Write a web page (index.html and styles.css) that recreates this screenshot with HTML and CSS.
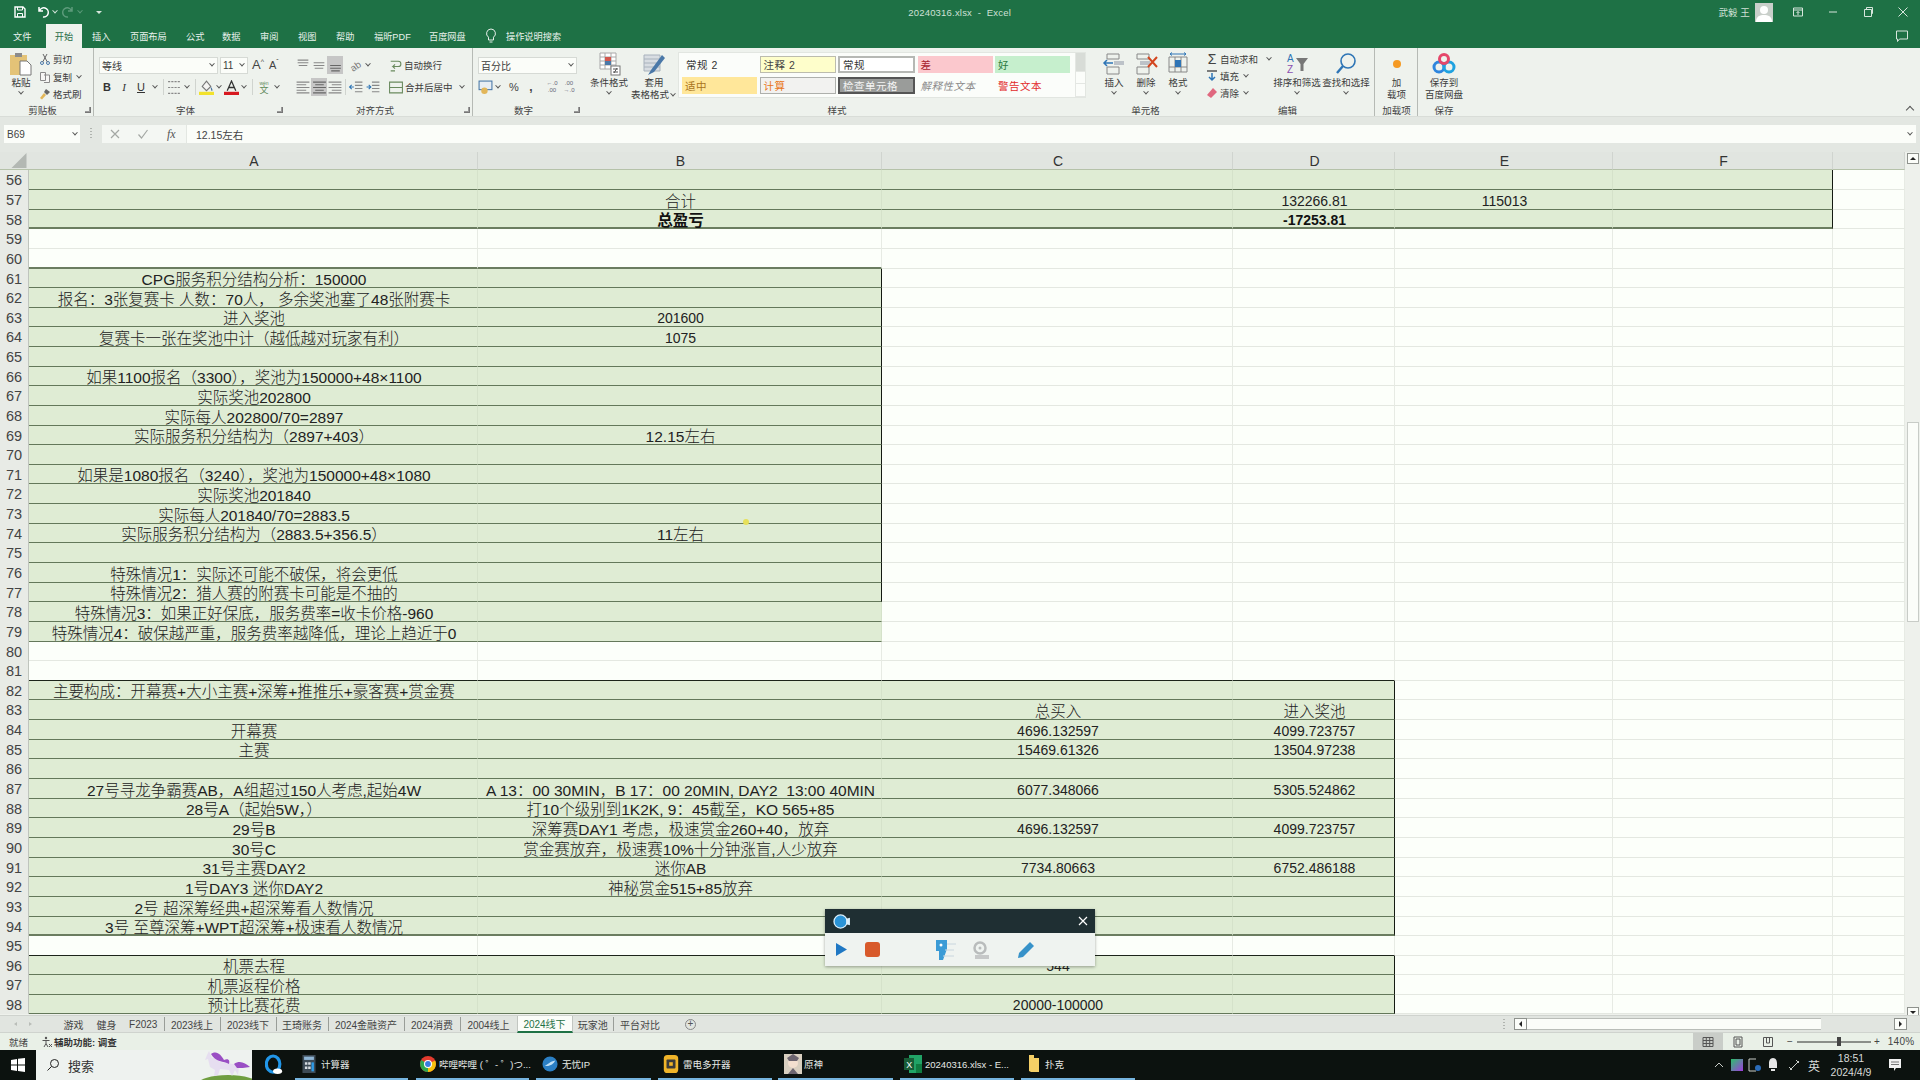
FILE: index.html
```html
<!DOCTYPE html>
<html lang="zh-CN">
<head>
<meta charset="utf-8">
<title>20240316.xlsx - Excel</title>
<link rel="stylesheet" href="styles.css">
</head>
<body>
<div class="app">
  <header class="titlebar">
    <div class="qat">
      <svg class="i14" viewBox="0 0 14 14"><path d="M2 2h8l2 2v8H2z" fill="none" stroke="#fff" stroke-width="1.4"/><path d="M4.5 2v3h5V2M4.5 12V8.5h5V12" fill="none" stroke="#fff"/></svg>
      <svg class="i14 q1" viewBox="0 0 14 14"><path d="M3 2v4h4M3.4 5.8A4.6 4.6 0 1 1 7 12" fill="none" stroke="#fff" stroke-width="1.5"/></svg>
      <span class="car w"></span>
      <svg class="i14 q2" viewBox="0 0 14 14"><path d="M11 2v4H7M10.6 5.8A4.6 4.6 0 1 0 7 12" fill="none" stroke="#5d9b7b" stroke-width="1.5"/></svg>
      <span class="car dim"></span>
      <span class="more"></span>
    </div>
    <div class="doc">20240316.xlsx&nbsp; -&nbsp; Excel</div>
    <div class="winbtns">
      <span class="user">武毅 王</span>
      <svg class="avatar" viewBox="0 0 18 19"><rect width="18" height="19" fill="#c9cfca"/><circle cx="9" cy="7" r="4" fill="#fff"/><path d="M1 19c0-6 4-7 8-7s8 1 8 7z" fill="#fff"/></svg>
      <svg class="i12 rd" viewBox="0 0 12 12"><path d="M1.500 2h9v8h-9zM1.500 4h9M6 9V5.500M4.500 7 6 5.500 7.500 7" fill="none" stroke="#d7e6dd"/></svg>
      <span class="wb"><svg class="i12" viewBox="0 0 12 12"><path d="M2 6h8" stroke="#d7e6dd"/></svg></span>
      <span class="wb"><svg class="i12" viewBox="0 0 12 12"><path d="M2.500 3.500h7v7h-7zM4.500 3.500v-2h6v6h-1" fill="none" stroke="#d7e6dd"/></svg></span>
      <span class="wb"><svg class="i12" viewBox="0 0 12 12"><path d="M1.500 1.500l9 9M10.500 1.500l-9 9" stroke="#d7e6dd"/></svg></span>
    </div>
  </header>

  <nav class="tabbar">
    <span class="rt tn-file">文件</span>
    <span class="rt active">开始</span>
    <span class="rt tn-ins">插入</span>
    <span class="rt tn-page">页面布局</span>
    <span class="rt tn-form">公式</span>
    <span class="rt tn-std">数据</span>
    <span class="rt tn-std">审阅</span>
    <span class="rt tn-std">视图</span>
    <span class="rt tn-std">帮助</span>
    <span class="rt tn-pdf">福昕PDF</span>
    <span class="rt tn-pan">百度网盘</span>
    <svg class="bulb" viewBox="0 0 12 16"><path d="M6 1a4.500 4.500 0 0 0-2.500 8.200V12h5V9.200A4.500 4.500 0 0 0 6 1zM4.500 14h3" fill="none" stroke="#e6f0ea"/></svg>
    <span class="rt tn-tell">操作说明搜索</span>
    <svg class="cmt" viewBox="0 0 14 14"><path d="M1.500 2h11v8h-8l-2 2.500V10h-1z" fill="none" stroke="#d7e6dd"/></svg>
  </nav>

  <section class="ribbon">
    <div class="grp g-clip sep">
      <div class="body">
        <div class="big paste">
          <svg class="i24" viewBox="0 0 24 24"><rect x="1" y="3" width="17" height="20" fill="#e4c377"/><rect x="6" y="1" width="7" height="4" fill="#8c8c8c"/><path d="M11 9h7l4 4v10H11z" fill="#fff" stroke="#777"/></svg>
          <span>粘贴</span><span class="car"></span>
        </div>
        <div class="smalls clipsm">
          <div class="sm"><svg class="i12" viewBox="0 0 12 12"><circle cx="3" cy="10" r="1.500" fill="none" stroke="#4a78a8"/><circle cx="9" cy="10" r="1.500" fill="none" stroke="#4a78a8"/><path d="M3.800 8.800 8 1M8.200 8.800 4 1" stroke="#666"/></svg><span>剪切</span></div>
          <div class="sm"><svg class="i12" viewBox="0 0 12 12"><path d="M1.500 1.500h5v8h-5zM5 4h5.500v7.500H5" fill="#f6f6f4" stroke="#8a8a8a"/></svg><span>复制</span><span class="car"></span></div>
          <div class="sm"><svg class="i12" viewBox="0 0 12 12"><path d="M7 1l4 3-3 3-3-3z" fill="#666"/><path d="M5 5 1 10l2 1.500L7 7z" fill="#e2b659"/></svg><span>格式刷</span></div>
        </div>
      </div>
      <div class="lab"><span>剪贴板</span><i class="lau"></i></div>
    </div>

    <div class="grp g-font">
      <div class="body col">
        <div class="line">
          <span class="box fname">等线<span class="car"></span></span>
          <span class="box fsize">11<span class="car"></span></span>
          <span class="ab big-a">A<sup>^</sup></span>
          <span class="ab small-a">A<sup>ˇ</sup></span>
        </div>
        <div class="line l2">
          <span class="ib b">B</span><span class="ib it">I</span><span class="ib un">U</span><span class="car"></span>
          <span class="vs"></span>
          <svg class="ico" viewBox="0 0 14 14"><path d="M1 1.500h12M1 7h12M1 12.500h12" stroke="#888" stroke-dasharray="2 1"/></svg><span class="car"></span>
          <span class="vs"></span>
          <svg class="ico" viewBox="0 0 14 14"><path d="M7 1 3 6l4 4 4-4z" fill="#f4f4f2" stroke="#777"/><path d="M11 7c1 1.500 1.500 2 1 3" stroke="#4a78a8"/><rect y="11" width="14" height="3" fill="#f2e22c"/></svg><span class="car"></span>
          <svg class="ico" viewBox="0 0 14 14"><path d="M3 10 7 1l4 9M4.500 7h5" fill="none" stroke="#333" stroke-width="1.200"/><rect y="11" width="14" height="3" fill="#d71920"/></svg><span class="car"></span>
          <span class="vs"></span>
          <span class="wen"><small>wén</small>文</span><span class="car"></span>
        </div>
      </div>
      <div class="lab"><span>字体</span><i class="lau"></i></div>
    </div>

    <div class="grp g-align sep">
      <div class="body col">
        <div class="line">
          <svg class="ico" viewBox="0 0 14 14"><path d="M2 2h10M2 4.500h10M3 7h8" stroke="#888"/></svg>
          <svg class="ico" viewBox="0 0 14 14"><path d="M2 4.500h10M2 7h10M3 9.500h8" stroke="#888"/></svg>
          <span class="sel"><svg class="ico" viewBox="0 0 14 14"><path d="M2 7h10M2 9.500h10M3 12h8" stroke="#666"/></svg></span>
          <svg class="ico m4" viewBox="0 0 14 14"><text x="2" y="11" font-size="9" fill="#777" font-family="Liberation Sans" transform="rotate(-35 7 7)">ab</text></svg><span class="car"></span>
          <svg class="ico m15" viewBox="0 0 14 14"><path d="M3 3h7a2.500 2.500 0 0 1 0 5H5l2-2M5 8l2 2M3 12h4" fill="none" stroke="#6a8a5e"/></svg>
          <span class="tx m1">自动换行</span>
        </div>
        <div class="line l2">
          <svg class="ico" viewBox="0 0 14 14"><path d="M1 2h12M1 4.500h9M1 7h12M1 9.500h9M1 12h12" stroke="#888"/></svg>
          <span class="sel"><svg class="ico" viewBox="0 0 14 14"><path d="M1 2h12M3 4.500h8M1 7h12M3 9.500h8M1 12h12" stroke="#666"/></svg></span>
          <svg class="ico" viewBox="0 0 14 14"><path d="M1 2h12M4 4.500h9M1 7h12M4 9.500h9M1 12h12" stroke="#888"/></svg>
          <span class="vs n"></span>
          <svg class="ico" viewBox="0 0 14 14"><path d="M6 2h7M6 5h7M6 8h7M6 11h7" stroke="#888"/><path d="M1 6.500h4M3 4.500l-2 2 2 2" fill="none" stroke="#2e75b6"/></svg>
          <svg class="ico m3" viewBox="0 0 14 14"><path d="M6 2h7M6 5h7M6 8h7M6 11h7" stroke="#888"/><path d="M1 6.500h4M3 4.500l2 2-2 2" fill="none" stroke="#2e75b6"/></svg>
          <svg class="ico m7" viewBox="0 0 14 14"><path d="M1 2h12v10H1zM1 7h12" fill="none" stroke="#6a8a5e"/></svg>
          <span class="tx m1">合并后居中</span><span class="car m5"></span>
        </div>
      </div>
      <div class="lab"><span>对齐方式</span><i class="lau"></i></div>
    </div>

    <div class="grp g-num">
      <div class="body col">
        <div class="line"><span class="box nfmt">百分比<span class="car"></span></span></div>
        <div class="line l2 nrow">
          <svg class="ico" viewBox="0 0 14 14"><rect x="1" y="1" width="12" height="8" fill="#e8eef4" stroke="#4a78a8"/><circle cx="6" cy="10" r="3" fill="#e2b659"/></svg><span class="car"></span>
          <span class="pct">%</span><span class="cma">,</span>
          <span class="dec">←.0<br>.00</span><span class="dec">.00<br>→.0</span>
        </div>
      </div>
      <div class="lab"><span>数字</span><i class="lau"></i></div>
    </div>

    <div class="grp g-sty">
      <div class="body">
        <div class="big cf">
          <svg class="i24" viewBox="0 0 24 24"><path d="M3 1h16v16H3zM3 5h16M3 9h16M3 13h16M8 1v16M14 1v16" fill="#fff" stroke="#a8a8a8"/><rect x="8" y="5" width="6" height="4" fill="#d3574d"/><rect x="8" y="9" width="6" height="4" fill="#4a78a8"/><rect x="14" y="14" width="9" height="9" fill="#fff" stroke="#777"/><path d="M16 17h5M16 20h5M20 16l-3 5" stroke="#555"/></svg>
          <span>条件格式</span><span class="car"></span>
        </div>
        <div class="big tf">
          <svg class="i24" viewBox="0 0 24 24"><path d="M2 3h16v16H2zM2 7h16M2 11h16M2 15h16" fill="#d8dde2" stroke="#a8b2bc"/><path d="M20 3 9 18l-3 5 6-3L23 6z" fill="#4a78a8"/></svg>
          <span>套用</span><span>表格格式<i class="car in"></i></span>
        </div>
        <div class="gallery">
          <div class="gcells">
            <span class="st s1">常规 2</span>
            <span class="st s2">注释 2</span>
            <span class="st s3">常规</span>
            <span class="st s4">差</span>
            <span class="st s5">好</span>
            <span class="st s6">适中</span>
            <span class="st s7">计算</span>
            <span class="st s8">检查单元格</span>
            <span class="st s9">解释性文本</span>
            <span class="st s10">警告文本</span>
          </div>
          <div class="gscroll"><i></i><i></i><i></i></div>
        </div>
      </div>
      <div class="lab"><span>样式</span></div>
    </div>

    <div class="grp g-cells">
      <div class="body">
        <div class="big w32">
          <svg class="i24" viewBox="0 0 24 24"><path d="M5 2h12v5H5zM5 15h12v7H5z" fill="none" stroke="#888"/><rect x="12" y="9" width="10" height="4" fill="#bcc2c8"/><path d="M11 11H2M5 8l-3 3 3 3" fill="none" stroke="#2e75b6" stroke-width="1.500"/></svg>
          <span>插入</span><span class="car"></span>
        </div>
        <div class="big w32">
          <svg class="i24" viewBox="0 0 24 24"><path d="M3 2h12v5H3zM3 15h12v7H3z" fill="none" stroke="#888"/><rect x="6" y="9" width="10" height="4" fill="#bcc2c8"/><path d="M14 5l9 10M23 5l-9 10" stroke="#d3461f" stroke-width="2"/></svg>
          <span>删除</span><span class="car"></span>
        </div>
        <div class="big w32">
          <svg class="i24" viewBox="0 0 24 24"><path d="M3 5h18v15H3zM9 5v15M15 5v15M3 15h18" fill="none" stroke="#888"/><rect x="9" y="8" width="6" height="7" fill="#2e75b6"/><path d="M4 2h16M4 2l2-1.500M4 2l2 1.500M20 2l-2-1.500M20 2l-2 1.500" fill="none" stroke="#2e75b6"/></svg>
          <span>格式</span><span class="car"></span>
        </div>
      </div>
      <div class="lab"><span>单元格</span></div>
    </div>

    <div class="grp g-edit sep">
      <div class="body">
        <div class="smalls ed">
          <div class="sm"><span class="sig">Σ</span><span>自动求和</span><span class="car m8"></span></div>
          <div class="sm"><svg class="i12" viewBox="0 0 12 12"><path d="M1 1h10" stroke="#555" stroke-width="1.500"/><path d="M6 3v7M3 7l3 3 3-3" fill="none" stroke="#2e75b6" stroke-width="1.500"/></svg><span>填充</span><span class="car"></span></div>
          <div class="sm"><svg class="i12" viewBox="0 0 12 12"><path d="M7 1l4 4-6 6-4-3z" fill="#e0687f"/></svg><span>清除</span><span class="car"></span></div>
        </div>
        <div class="big w46">
          <svg class="i24" viewBox="0 0 24 24"><text x="2" y="10" font-size="10" fill="#2e75b6" font-family="Liberation Sans">A</text><text x="2" y="21" font-size="10" fill="#8a4fb0" font-family="Liberation Sans">Z</text><path d="M11 6h12l-4.500 6v7h-3v-7z" fill="#777"/></svg>
          <span class="nw">排序和筛选</span><span class="car"></span>
        </div>
        <div class="big w46">
          <svg class="i24" viewBox="0 0 24 24"><circle cx="14" cy="9" r="7" fill="none" stroke="#2e75b6" stroke-width="1.600"/><path d="M9 14l-6 7" stroke="#2e75b6" stroke-width="2.400"/></svg>
          <span class="nw">查找和选择</span><span class="car"></span>
        </div>
      </div>
      <div class="lab"><span>编辑</span></div>
    </div>

    <div class="grp g-add sep">
      <div class="body">
        <div class="big">
          <svg class="i24" viewBox="0 0 24 24"><circle cx="12" cy="12" r="4" fill="#f59a23"/></svg>
          <span>加</span><span>载项</span>
        </div>
      </div>
      <div class="lab"><span>加载项</span></div>
    </div>

    <div class="grp g-save">
      <div class="body">
        <div class="big">
          <svg class="i24" viewBox="0 0 24 24"><circle cx="7" cy="15" r="5" fill="none" stroke="#2e86de" stroke-width="3"/><circle cx="17" cy="15" r="5" fill="none" stroke="#1fa2e0" stroke-width="3"/><circle cx="12" cy="7" r="4.500" fill="none" stroke="#e5476a" stroke-width="3"/></svg>
          <span>保存到</span><span>百度网盘</span>
        </div>
      </div>
      <div class="lab"><span>保存</span></div>
    </div>
    <span class="collapse"></span>
  </section>

  <section class="fbar">
    <div class="namebox">B69<span class="car"></span></div>
    <span class="dots"></span>
    <div class="fbtns">
      <svg class="i12" viewBox="0 0 12 12"><path d="M2 2l8 8M10 2l-8 8" stroke="#a4a8a4" stroke-width="1.200"/></svg>
      <svg class="i12" viewBox="0 0 12 12"><path d="M1.500 6.500 4.500 10l6-8" fill="none" stroke="#a4a8a4" stroke-width="1.200"/></svg>
      <span class="fx">fx</span>
    </div>
    <div class="finput">12.15左右<span class="car"></span></div>
  </section>

  <main class="work">
    <div class="sheet">
      <div class="row hdr">
        <span class="corner"><svg viewBox="0 0 16 16"><path d="M16 0v16H0z" fill="#b3b8b3"/></svg></span>
        <span class="ch">A</span><span class="ch">B</span><span class="ch">C</span><span class="ch">D</span><span class="ch">E</span><span class="ch">F</span><span class="ch"></span>
      </div>
      <div class="row fa"><span class="rh">56</span><span class="c"></span><span class="c"></span><span class="c"></span><span class="c"></span><span class="c"></span><span class="c"></span><span class="c"></span></div>
      <div class="row fa"><span class="rh">57</span><span class="c"></span><span class="c">合计</span><span class="c"></span><span class="c n">132266.81</span><span class="c n">115013</span><span class="c"></span><span class="c"></span></div>
      <div class="row fa thick"><span class="rh">58</span><span class="c"></span><span class="c bold">总盈亏</span><span class="c"></span><span class="c n bold">-17253.81</span><span class="c"></span><span class="c"></span><span class="c"></span></div>
      <div class="row"><span class="rh">59</span><span class="c"></span><span class="c"></span><span class="c"></span><span class="c"></span><span class="c"></span><span class="c"></span><span class="c"></span></div>
      <div class="row over-b"><span class="rh">60</span><span class="c"></span><span class="c"></span><span class="c"></span><span class="c"></span><span class="c"></span><span class="c"></span><span class="c"></span></div>
      <div class="row fb e"><span class="rh">61</span><span class="c">CPG服务积分结构分析：150000</span><span class="c"></span><span class="c"></span><span class="c"></span><span class="c"></span><span class="c"></span><span class="c"></span></div>
      <div class="row fb e"><span class="rh">62</span><span class="c">报名：3张复赛卡 人数：70人， 多余奖池塞了48张附赛卡</span><span class="c"></span><span class="c"></span><span class="c"></span><span class="c"></span><span class="c"></span><span class="c"></span></div>
      <div class="row fb e"><span class="rh">63</span><span class="c">进入奖池</span><span class="c n">201600</span><span class="c"></span><span class="c"></span><span class="c"></span><span class="c"></span><span class="c"></span></div>
      <div class="row fb e"><span class="rh">64</span><span class="c">复赛卡一张在奖池中计（越低越对玩家有利）</span><span class="c n">1075</span><span class="c"></span><span class="c"></span><span class="c"></span><span class="c"></span><span class="c"></span></div>
      <div class="row fb e"><span class="rh">65</span><span class="c"></span><span class="c"></span><span class="c"></span><span class="c"></span><span class="c"></span><span class="c"></span><span class="c"></span></div>
      <div class="row fb e"><span class="rh">66</span><span class="c">如果1100报名（3300），奖池为150000+48×1100</span><span class="c"></span><span class="c"></span><span class="c"></span><span class="c"></span><span class="c"></span><span class="c"></span></div>
      <div class="row fb e"><span class="rh">67</span><span class="c">实际奖池202800</span><span class="c"></span><span class="c"></span><span class="c"></span><span class="c"></span><span class="c"></span><span class="c"></span></div>
      <div class="row fb e"><span class="rh">68</span><span class="c">实际每人202800/70=2897</span><span class="c"></span><span class="c"></span><span class="c"></span><span class="c"></span><span class="c"></span><span class="c"></span></div>
      <div class="row fb e"><span class="rh">69</span><span class="c">实际服务积分结构为（2897+403）</span><span class="c">12.15左右</span><span class="c"></span><span class="c"></span><span class="c"></span><span class="c"></span><span class="c"></span></div>
      <div class="row fb e"><span class="rh">70</span><span class="c"></span><span class="c"></span><span class="c"></span><span class="c"></span><span class="c"></span><span class="c"></span><span class="c"></span></div>
      <div class="row fb e"><span class="rh">71</span><span class="c">如果是1080报名（3240），奖池为150000+48×1080</span><span class="c"></span><span class="c"></span><span class="c"></span><span class="c"></span><span class="c"></span><span class="c"></span></div>
      <div class="row fb e"><span class="rh">72</span><span class="c">实际奖池201840</span><span class="c"></span><span class="c"></span><span class="c"></span><span class="c"></span><span class="c"></span><span class="c"></span></div>
      <div class="row fb e"><span class="rh">73</span><span class="c">实际每人201840/70=2883.5</span><span class="c"></span><span class="c"></span><span class="c"></span><span class="c"></span><span class="c"></span><span class="c"></span></div>
      <div class="row fb e"><span class="rh">74</span><span class="c">实际服务积分结构为（2883.5+356.5）</span><span class="c">11左右</span><span class="c"></span><span class="c"></span><span class="c"></span><span class="c"></span><span class="c"></span></div>
      <div class="row fb e"><span class="rh">75</span><span class="c"></span><span class="c"></span><span class="c"></span><span class="c"></span><span class="c"></span><span class="c"></span><span class="c"></span></div>
      <div class="row fb e"><span class="rh">76</span><span class="c">特殊情况1：实际还可能不破保，将会更低</span><span class="c"></span><span class="c"></span><span class="c"></span><span class="c"></span><span class="c"></span><span class="c"></span></div>
      <div class="row fb e"><span class="rh">77</span><span class="c">特殊情况2：猎人赛的附赛卡可能是不抽的</span><span class="c"></span><span class="c"></span><span class="c"></span><span class="c"></span><span class="c"></span><span class="c"></span></div>
      <div class="row fb"><span class="rh">78</span><span class="c">特殊情况3：如果正好保底，服务费率=收卡价格-960</span><span class="c"></span><span class="c"></span><span class="c"></span><span class="c"></span><span class="c"></span><span class="c"></span></div>
      <div class="row fb"><span class="rh">79</span><span class="c">特殊情况4：破保越严重，服务费率越降低，理论上趋近于0</span><span class="c"></span><span class="c"></span><span class="c"></span><span class="c"></span><span class="c"></span><span class="c"></span></div>
      <div class="row"><span class="rh">80</span><span class="c"></span><span class="c"></span><span class="c"></span><span class="c"></span><span class="c"></span><span class="c"></span><span class="c"></span></div>
      <div class="row over-d"><span class="rh">81</span><span class="c"></span><span class="c"></span><span class="c"></span><span class="c"></span><span class="c"></span><span class="c"></span><span class="c"></span></div>
      <div class="row fd"><span class="rh">82</span><span class="c">主要构成：开幕赛+大小主赛+深筹+推推乐+豪客赛+赏金赛</span><span class="c"></span><span class="c"></span><span class="c"></span><span class="c"></span><span class="c"></span><span class="c"></span></div>
      <div class="row fd"><span class="rh">83</span><span class="c"></span><span class="c"></span><span class="c">总买入</span><span class="c">进入奖池</span><span class="c"></span><span class="c"></span><span class="c"></span></div>
      <div class="row fd"><span class="rh">84</span><span class="c">开幕赛</span><span class="c"></span><span class="c n">4696.132597</span><span class="c n">4099.723757</span><span class="c"></span><span class="c"></span><span class="c"></span></div>
      <div class="row fd"><span class="rh">85</span><span class="c">主赛</span><span class="c"></span><span class="c n">15469.61326</span><span class="c n">13504.97238</span><span class="c"></span><span class="c"></span><span class="c"></span></div>
      <div class="row fd"><span class="rh">86</span><span class="c"></span><span class="c"></span><span class="c"></span><span class="c"></span><span class="c"></span><span class="c"></span><span class="c"></span></div>
      <div class="row fd"><span class="rh">87</span><span class="c">27号寻龙争霸赛AB，A组超过150人考虑,起始4W</span><span class="c">A 13：00 30MIN，B 17：00 20MIN, DAY2&nbsp; 13:00 40MIN</span><span class="c n">6077.348066</span><span class="c n">5305.524862</span><span class="c"></span><span class="c"></span><span class="c"></span></div>
      <div class="row fd"><span class="rh">88</span><span class="c">28号A（起始5W，）</span><span class="c">打10个级别到1K2K, 9：45截至，KO 565+85</span><span class="c"></span><span class="c"></span><span class="c"></span><span class="c"></span><span class="c"></span></div>
      <div class="row fd"><span class="rh">89</span><span class="c">29号B</span><span class="c">深筹赛DAY1 考虑，极速赏金260+40，放弃</span><span class="c n">4696.132597</span><span class="c n">4099.723757</span><span class="c"></span><span class="c"></span><span class="c"></span></div>
      <div class="row fd"><span class="rh">90</span><span class="c">30号C</span><span class="c">赏金赛放弃，极速赛10%十分钟涨盲,人少放弃</span><span class="c"></span><span class="c"></span><span class="c"></span><span class="c"></span><span class="c"></span></div>
      <div class="row fd"><span class="rh">91</span><span class="c">31号主赛DAY2</span><span class="c">迷你AB</span><span class="c n">7734.80663</span><span class="c n">6752.486188</span><span class="c"></span><span class="c"></span><span class="c"></span></div>
      <div class="row fd"><span class="rh">92</span><span class="c">1号DAY3 迷你DAY2</span><span class="c">神秘赏金515+85放弃</span><span class="c"></span><span class="c"></span><span class="c"></span><span class="c"></span><span class="c"></span></div>
      <div class="row fd"><span class="rh">93</span><span class="c">2号 超深筹经典+超深筹看人数情况</span><span class="c"></span><span class="c"></span><span class="c"></span><span class="c"></span><span class="c"></span><span class="c"></span></div>
      <div class="row fd thick"><span class="rh">94</span><span class="c">3号 至尊深筹+WPT超深筹+极速看人数情况</span><span class="c"></span><span class="c"></span><span class="c"></span><span class="c"></span><span class="c"></span><span class="c"></span></div>
      <div class="row over-d"><span class="rh">95</span><span class="c"></span><span class="c"></span><span class="c"></span><span class="c"></span><span class="c"></span><span class="c"></span><span class="c"></span></div>
      <div class="row fd"><span class="rh">96</span><span class="c">机票去程</span><span class="c"></span><span class="c n">544</span><span class="c"></span><span class="c"></span><span class="c"></span><span class="c"></span></div>
      <div class="row fd"><span class="rh">97</span><span class="c">机票返程价格</span><span class="c"></span><span class="c"></span><span class="c"></span><span class="c"></span><span class="c"></span><span class="c"></span></div>
      <div class="row fd"><span class="rh">98</span><span class="c">预计比赛花费</span><span class="c"></span><span class="c n">20000-100000</span><span class="c"></span><span class="c"></span><span class="c"></span><span class="c"></span></div>
    </div>
    <aside class="vscroll">
      <span class="sbtn up"></span>
      <span class="vthumb"></span>
      <span class="sbtn down"></span>
    </aside>
  </main>

  <section class="sheettabs">
    <span class="nav"><i></i><i></i></span>
    <span class="st-tab w33">游戏</span>
    <span class="st-tab w33">健身</span>
    <span class="st-tab w41 div">F2023</span>
    <span class="st-tab w56 div">2023线上</span>
    <span class="st-tab w56 div">2023线下</span>
    <span class="st-tab w52 div">王琦账务</span>
    <span class="st-tab w76 div">2024金融资产</span>
    <span class="st-tab w56 div">2024消费</span>
    <span class="st-tab w56">2004线上</span>
    <span class="st-tab w56 on">2024线下</span>
    <span class="st-tab w41 div">玩家池</span>
    <span class="st-tab w52">平台对比</span>
    <span class="addsheet">+</span>
    <span class="hgrip"></span>
    <div class="hscroll">
      <span class="hbtn lft"></span>
      <span class="hthumb"></span>
      <span class="htrack"></span>
      <span class="hbtn rgt"></span>
    </div>
  </section>

  <footer class="status">
    <span class="ready">就绪</span>
    <svg class="i12 acc" viewBox="0 0 12 12"><circle cx="5" cy="2" r="1.200" fill="#555"/><path d="M1.500 4.500h7M5 4.500v3l-2 3.500M5 7.500l2 3.500" fill="none" stroke="#555"/><path d="M8 8l3 3M11 8l-3 3" stroke="#555"/></svg>
    <span class="acctx">辅助功能: 调查</span>
    <div class="views">
      <span class="vb on"><svg class="i12" viewBox="0 0 12 12"><path d="M1 1.500h10v9H1zM1 4.500h10M1 7.500h10M4.300 1.500v9M7.700 1.500v9" fill="none" stroke="#555"/></svg></span>
      <span class="vb"><svg class="i12" viewBox="0 0 12 12"><path d="M2 1h8v10H2zM4 3h4v6H4z" fill="none" stroke="#555"/></svg></span>
      <span class="vb"><svg class="i12" viewBox="0 0 12 12"><path d="M1.500 1.500h9v9h-9zM4.500 1.500V7h3V1.500" fill="none" stroke="#555"/></svg></span>
    </div>
    <div class="zoom"><span class="zm">−</span><span class="ztrack"><i></i></span><span class="zm">+</span><span class="zpct">140%</span></div>
  </footer>

  <footer class="taskbar">
    <span class="start"><svg viewBox="0 0 14 14"><path d="M0 2 6 1v5.500H0zM7 .8 14 0v6.500H7zM0 7.500h6V13l-6-1zM7 7.500h7V14l-7-1z" fill="#fff"/></svg></span>
    <div class="search">
      <svg class="i14" viewBox="0 0 14 14"><circle cx="8.500" cy="5.500" r="4" fill="none" stroke="#222"/><path d="M5.500 8.500 1.500 12.500" stroke="#222"/></svg>
      <span>搜索</span>
      <svg class="unicorn" viewBox="0 0 56 30"><ellipse cx="32" cy="34" rx="30" ry="9" fill="#6f9e3f"/><path d="M13 1l3 7 5-1 3 5 13 2 6 3-1 8-3-5-3 6-3-6-9-1-2 6-4 1 1-6-5-3-2-8-3 1 2-5z" fill="#e6def0"/><path d="M15 4c6-4 10 1 13 6 5-2 6 1 5 4-5-3-14-2-18-10zM38 14c6-4 11-1 16 3-5 1-10 1-13 1z" fill="#9a4fc4"/></svg>
    </div>
    <span class="qicon"><svg viewBox="0 0 20 22"><ellipse cx="9" cy="10" rx="7.500" ry="9" fill="none" stroke="#2196e8" stroke-width="3.500"/><ellipse cx="14" cy="18" rx="5" ry="3" fill="#fff"/></svg></span>
    <span class="tk t-calc"><svg class="i16" viewBox="0 0 16 22"><rect width="16" height="22" fill="#3d4a55"/><rect x="2" y="2" width="12" height="4" fill="#8fb6d6"/><path d="M3 9h3v3H3zM7 9h3v3H7zM3 14h3v3H3zM7 14h3v3H7z" fill="#d8dde2"/><rect x="11" y="9" width="3" height="11" fill="#2e9be6"/></svg>计算器</span>
    <span class="tk t-br"><svg class="i16" viewBox="0 0 18 18"><circle cx="9" cy="9" r="9" fill="#e33b2e"/><path d="M9 9 17 5a9 9 0 0 1-8 13z" fill="#f6c10f"/><path d="M9 9 9 18A9 9 0 0 1 1.300 4.500z" fill="#2fa84f"/><circle cx="9" cy="9" r="4.500" fill="#fff"/><circle cx="9" cy="9" r="3.300" fill="#3b7de0"/></svg>哔哩哔哩 ( ゜- ゜)つ...</span>
    <span class="tk t-ip"><svg class="i16" viewBox="0 0 18 18"><circle cx="9" cy="9" r="8.500" fill="#2b7fc4"/><path d="M3 11c3-1 6-5 12-6-2 4-6 7-12 6z" fill="#bfe0f6"/></svg>无忧IP</span>
    <span class="tk t-ld"><svg class="i16" viewBox="0 0 16 20"><rect width="16" height="20" rx="4" fill="#f0b429"/><rect x="3" y="5" width="10" height="10" rx="1" fill="#3a3a3a"/><rect x="6" y="8" width="4" height="4" fill="#f0b429"/></svg>雷电多开器</span>
    <span class="tk t-ys"><svg class="i18" viewBox="0 0 18 20"><rect width="18" height="20" fill="#d9cfc0"/><circle cx="9" cy="9" r="5" fill="#f3dfcf"/><path d="M3 4l6-4 6 4-2 3H5zM4 20l5-6 5 6z" fill="#6d6570"/></svg>原神</span>
    <span class="tk t-xl"><svg class="i18" viewBox="0 0 18 18"><rect x="5" width="13" height="18" fill="#21a366"/><rect x="12" y="9" width="6" height="9" fill="#107c41"/><rect y="3" width="10" height="12" fill="#185c37"/><text x="2.300" y="12.500" font-size="9" fill="#fff" font-family="Liberation Sans">X</text></svg>20240316.xlsx - E...</span>
    <span class="tk t-pk"><svg class="i16" viewBox="0 0 12 18"><path d="M1 0h5v3h5v14H3l-2-1z" fill="#f5cf66"/></svg>扑克</span>
    <div class="tray">
      <svg class="i10" viewBox="0 0 10 10"><path d="M1 7l4-4 4 4" fill="none" stroke="#c8ccc8"/></svg>
      <svg class="tg" viewBox="0 0 14 14"><defs><linearGradient id="tgr" x2="1" y2="1"><stop offset="0" stop-color="#2bc06a"/><stop offset="1" stop-color="#a03be0"/></linearGradient></defs><rect width="14" height="14" fill="url(#tgr)"/></svg>
      <svg class="i14 tg1" viewBox="0 0 14 14"><path d="M9 1H2v12h7" fill="none" stroke="#c8ccc8"/><circle cx="11" cy="10" r="3" fill="#2b6cb8"/></svg>
      <svg class="i14 tg2" viewBox="0 0 14 14"><path d="M7 0c3 0 4 3 4 5v5H3V5c0-2 1-5 4-5zM5 11h4v2H5z" fill="#e6e6e6"/></svg>
      <svg class="i14 tg3" viewBox="0 0 14 14"><path d="M3 12 12 3M2 9l3 3M9 2l3 3" stroke="#c8ccc8" fill="none"/></svg>
      <span class="ime">英</span>
      <span class="clock">18:51<br>2024/4/9</span>
      <svg class="note" viewBox="0 0 14 14"><path d="M1 1h12v9H8l-2 3v-3H1z" fill="#f2f2f2"/><path d="M3 4h8M3 6.500h8" stroke="#777"/></svg>
    </div>
  </footer>

  <div class="recorder">
    <div class="rec-head">
      <svg class="rec-logo" viewBox="0 0 18 16"><circle cx="8" cy="8" r="7" fill="#2b93d6" stroke="#d9eefb" stroke-width="1.400"/><path d="M14 5l4-1v8l-4-1z" fill="#d9eefb"/></svg>
      <svg class="rec-x" viewBox="0 0 10 10"><path d="M1 1l8 8M9 1 1 9" stroke="#fff" stroke-width="1.200"/></svg>
    </div>
    <div class="rec-body">
      <svg class="rec-play" viewBox="0 0 12 14"><path d="M0 0l12 7-12 7z" fill="#1f78c4"/></svg>
      <span class="rec-stop"></span>
      <svg class="rec-a" viewBox="0 0 20 20"><path d="M0 0h11v9l-4 11H3V11H0z" fill="#3b9bd6"/><circle cx="5" cy="5" r="1.500" fill="#fff"/><path d="M11 4h9M9 10h9M7 16h11" stroke="#c9d6de"/></svg>
      <svg class="rec-b" viewBox="0 0 18 18"><circle cx="7" cy="7" r="5.500" fill="none" stroke="#b9bcbc" stroke-width="2.500"/><circle cx="7" cy="7" r="1.500" fill="#b9bcbc"/><path d="M2 14h14v4H2z" fill="#c6c8c8"/></svg>
      <svg class="rec-c" viewBox="0 0 18 18"><path d="M13 1l4 4L6 16l-5 1 1-5z" fill="#3792c9"/></svg>
    </div>
  </div>
  <span class="pointer"></span>
</div>
</body>
</html>
```

FILE: styles.css
```css
* { box-sizing: border-box; }
html, body { margin: 0; padding: 0; }
body { font-family: "Liberation Sans", "Noto Sans CJK SC", sans-serif; color: #333; }
.app { position: relative; width: 1920px; height: 1080px; overflow: hidden; display: flex; flex-direction: column; background: #eef2ed; }
svg { display: block; flex: none; }
.i10 { width: 10px; height: 10px; }
.i12 { width: 12px; height: 12px; }
.i14 { width: 14px; height: 14px; }
.i16 { width: 16px; height: 18px; }
.i18 { width: 18px; height: 20px; }
.i24 { width: 24px; height: 24px; }

.car { display: inline-flex; flex: none; width: 10px; height: 8px; align-items: center; justify-content: center; }
.car::before { content: ""; width: 3px; height: 3px; border-right: 1px solid #555; border-bottom: 1px solid #555; transform: rotate(45deg) translate(-1px, -1px); }
.car.w::before { border-color: #d7e6dd; }
.car.dim::before { border-color: #5d9b7b; }

/* title bar */
.titlebar { height: 24px; background: #1e7145; display: flex; align-items: center; color: #cfe0d6; font-size: 9.5px; }
.qat { width: 660px; padding-left: 13px; display: flex; align-items: center; }
.q1 { margin-left: 9px; }
.q2 { margin-left: 1px; }
.more { margin-left: 11px; width: 0; height: 0; border-left: 3px solid transparent; border-right: 3px solid transparent; border-top: 3px solid #d7e6dd; }
.doc { width: 600px; text-align: center; letter-spacing: .2px; }
.winbtns { flex: 1; display: flex; align-items: center; padding-left: 459px; }
.user { width: 36px; white-space: nowrap; }
.avatar { width: 18px; height: 19px; }
.rd { margin-left: 19px; margin-right: 11.500px; }
.wb { width: 35px; display: flex; justify-content: center; flex: none; }

/* tab row */
.tabbar { height: 24px; background: #1e7145; display: flex; align-items: stretch; color: #e8f1ec; font-size: 9.2px; position: relative; }
.rt { display: flex; align-items: center; white-space: nowrap; }
.tn-file { margin-left: 13px; width: 33px; }
.active { width: 36px; justify-content: center; background: #eef2ed; color: #2a6e49; }
.tn-ins { margin-left: 10px; width: 38px; }
.tn-page { width: 56px; }
.tn-form { width: 36px; }
.tn-std { width: 38px; }
.tn-pdf { width: 55px; }
.tn-pan { width: 53px; }
.bulb { width: 12px; height: 16px; align-self: center; margin-left: 3px; margin-right: 9px; }
.tn-tell { width: 60px; }
.cmt { width: 14px; height: 14px; align-self: center; margin-left: auto; margin-right: 11px; }

/* ribbon */
.ribbon { height: 69px; background: #eef2ed; display: flex; font-size: 9.5px; color: #3c3c3c; border-bottom: 1px solid #d9ddd8; position: relative; }
.grp { display: flex; flex-direction: column; flex: none; padding-top: 4px; }
.sep { box-shadow: inset -1px 0 0 #b6bab5; }
.body { height: 52px; flex: none; display: flex; }
.body.col { flex-direction: column; padding-top: 4px; }
.lab { height: 12px; flex: none; display: flex; align-items: center; font-size: 9.5px; color: #444; }
.lab span { flex: 1; text-align: center; white-space: nowrap; }
.lau { width: 6px; height: 6px; margin-right: 3px; border-right: 1px solid #777; border-bottom: 1px solid #777; box-shadow: inset -2px -2px 0 -1px #999; }
.g-clip { width: 94px; }
.g-font { width: 192px; }
.g-align { width: 187px; }
.g-num { width: 110px; }
.g-sty { width: 508px; }
.g-cells { width: 109px; }
.g-edit { width: 175px; }
.g-add { width: 43px; }
.g-save { width: 52px; }

.big { display: flex; flex-direction: column; align-items: center; flex: none; line-height: 12px; }
.big span { white-space: nowrap; }
.big .i24 { margin-bottom: 1px; height: 24px; }
.paste { width: 42px; }
.smalls { display: flex; flex-direction: column; }
.clipsm { margin: -1.500px 0 0 -3px; }
.sm { height: 17.500px; display: flex; align-items: center; gap: 2px; white-space: nowrap; }
.sm .i12 { width: 12px; }
.ed { width: 74px; padding-left: 6px; margin-top: -2px; }
.ed .sm { height: 17px; }
.sig { width: 12px; font-size: 14px; line-height: 12px; text-align: center; color: #444; }
.m8 { margin-left: 4px; }

.line { display: flex; align-items: center; height: 18px; }
.l2 { margin-top: 4px; }
.box { height: 17px; background: #fbfdf9; border: 1px solid #d6dad5; display: flex; align-items: center; justify-content: space-between; padding-left: 2px; white-space: nowrap; font-size: 10px; }
.fname { width: 119px; margin-left: 5px; }
.fsize { width: 28px; margin-left: 2px; }
.ab { font-size: 13px; color: #444; white-space: nowrap; line-height: 14px; }
.ab sup { font-size: 7px; line-height: 0; }
.big-a { margin-left: 4px; width: 17px; }
.small-a { width: 14px; font-size: 11px; }
.ib { width: 16px; margin-right: 1px; text-align: center; font-size: 11px; color: #333; }
.b { margin-left: 5px; font-weight: bold; }
.it { font-style: italic; font-family: "Liberation Serif", serif; }
.un { text-decoration: underline; }
.vs { width: 1px; height: 16px; background: #d0d4cf; margin: 0 3px; flex: none; }
.vs.n { margin: 0 2px; }
.ico { width: 15px; height: 15px; }
.wen { width: 16px; font-size: 9px; color: #5e8a5a; line-height: 7px; text-align: center; }
.wen small { display: block; font-size: 5px; }
.g-align .line { padding-left: 9px; }
.sel { width: 16px; height: 18px; background: #c6c6c6; display: flex; align-items: center; justify-content: center; flex: none; }
.g-align .line > .ico { width: 16px; }
.m4 { margin-left: 4px; }
.m15 { margin-left: 14px; }
.m1 { margin-left: 1px; }
.m3 { margin-left: 1px; }
.m7 { margin-left: 7px; }
.m5 { margin-left: 4px; }
.tx { white-space: nowrap; font-size: 9.500px; }
.nfmt { width: 99px; margin-left: 5px; }
.nrow { padding-left: 5px; }
.pct { width: 16px; margin-left: 3px; text-align: center; font-size: 11px; color: #444; }
.cma { width: 16px; margin-left: 1px; text-align: center; font-size: 12px; font-weight: bold; color: #444; }
.dec { width: 17px; font-size: 6px; line-height: 7px; text-align: center; color: #667; white-space: nowrap; }
.cma + .dec { margin-left: 4.500px; }

.cf { width: 40px; margin-left: 6px; }
.tf { width: 50px; }
.in { vertical-align: middle; width: 8px; }
.gallery { width: 408px; height: 46px; background: #fbfdfa; border: 1px solid #e2e6e1; display: flex; margin-left: -1px; }
.gcells { flex: 1; padding: 3px 3px 0; display: grid; grid-template-columns: 75px 76px 77px 75px 75px; column-gap: 2.500px; row-gap: 4px; grid-auto-rows: 17px; }
.st { display: flex; align-items: center; padding-left: 3px; font-size: 10.500px; letter-spacing: .5px; white-space: nowrap; }
.s1 { color: #333; padding-left: 4px; }
.s2 { background: #fefecb; border: 1px solid #bcbcae; color: #444; }
.s3 { border: 2px solid #b6b8b4; background: #fff; color: #333; }
.s4 { background: #fbc8cd; color: #a8252f; }
.s5 { background: #c6efcd; color: #2c7a3e; }
.s6 { background: #ffe79a; color: #a9741c; }
.s7 { background: #f2f2f0; border: 1px solid #aeb0ac; color: #e8761c; }
.s8 { background: #9a9c9a; border: 2px solid #555; color: #f4f4f4; }
.s9 { color: #8a8a8a; font-style: italic; }
.s10 { color: #e22b2b; }
.gscroll { width: 10px; display: flex; flex-direction: column; border-left: 1px solid #e4e7e3; }
.gscroll i { flex: 1; border-bottom: 1px solid #e4e7e3; }
.gscroll i:first-child { flex: 1.500; background: #d8dcd7; }
.g-cells .body { padding-left: 7px; }
.w32 { width: 32px; }
.w46 { width: 46px; }
.nw { display: block; }
.g-edit .w46 { margin-right: 3px; }
.g-add .big, .g-save .big { flex: 1; }
.collapse { position: absolute; right: 7px; bottom: 3px; width: 6px; height: 6px; border-left: 1px solid #555; border-top: 1px solid #555; transform: rotate(45deg); }

/* formula bar */
.fbar { height: 35px; background: #e3e7e2; display: flex; padding: 8px 4px 9px; font-size: 10px; color: #444; }
.namebox { width: 76px; background: #fbfdf9; display: flex; align-items: center; justify-content: space-between; padding-left: 3px; }
.dots { width: 2px; margin: 3px 10px; background-image: linear-gradient(#b0b4af 50%, transparent 50%); background-size: 2px 3px; }
.fbtns { width: 84px; background: #f4f7f3; display: flex; align-items: center; padding-left: 7px; gap: 16px; }
.fx { font-family: "Liberation Serif", serif; font-style: italic; font-size: 12px; margin-left: 2px; color: #555; }
.finput { flex: 1; background: #fbfdf9; margin-left: 1px; display: flex; align-items: center; justify-content: space-between; padding-left: 9px; padding-right: 1px; font-size: 10.500px; }

/* sheet */
.work { display: flex; height: 863px; background: #eef1ec; }
.sheet { width: 1905px; flex: none; overflow: hidden; font-size: 15.5px; color: #222; }
.row { display: grid; grid-template-columns: 29px 449px 404px 351px 162px 218px 220px 72px; grid-template-rows: minmax(0, 1fr); height: 20px; }
.row:nth-child(4), .row:nth-child(7), .row:nth-child(9), .row:nth-child(12), .row:nth-child(15), .row:nth-child(17), .row:nth-child(20), .row:nth-child(23),
.row:nth-child(26), .row:nth-child(28), .row:nth-child(31), .row:nth-child(34), .row:nth-child(37), .row:nth-child(40), .row:nth-child(42), .row:nth-child(44) { height: 19px; }
.row.hdr { height: 18px; background: #e1e5e0; }
.corner { display: flex; justify-content: flex-end; align-items: flex-end; padding: 0 1px 1px 0; border-bottom: 1px solid #b5c2a9; }
.corner svg { width: 18px; height: 15px; }
.ch { text-align: center; line-height: 18px; font-size: 14px; color: #333; border-right: 1px solid #d0d4cf; border-bottom: 1px solid #b5c2a9; padding-left: 2px; }
.rh { background: #e8ebe6; border-right: 1px solid #bfc4bd; color: #444; text-align: center; line-height: 21px; font-size: 14.500px; overflow: hidden; }
.c { display: flex; align-items: center; justify-content: center; white-space: nowrap; background: #fcfffa; border-right: 1px solid #e7ebe4; border-bottom: 1px solid #e4e8e1; padding: 3px 0 0 2px; font-weight: 300; line-height: 15px; min-width: 0; min-height: 0; }
.n { font-size: 14px; }
.bold { font-weight: bold; color: #111; }
.fa > .c:nth-child(-n+7), .fb > .c:nth-child(-n+3), .fd > .c:nth-child(-n+5) { background: #dfecd4; border-right-color: #d5e2ca; border-bottom-color: #64785a; }
.fa > .c:nth-child(7), .fb.e > .c:nth-child(3), .fd > .c:nth-child(5) { border-right-color: #141a12; }
.fa.thick > .c:nth-child(-n+7), .fd.thick > .c:nth-child(-n+5) { border-bottom: 2px solid #6b7d60; }
.over-b > .c:nth-child(-n+3) { border-bottom: 2px solid #6b7d60; }
.over-d > .c:nth-child(-n+5) { border-bottom: 1px solid #1c241a; }

.vscroll { flex: 1; display: flex; flex-direction: column; align-items: center; padding: 1px 0 0; background: #eef1ec; }
.sbtn { width: 12px; height: 11px; background: #fbfdf9; border: 1px solid #8e928d; flex: none; display: flex; align-items: center; justify-content: center; }
.sbtn::before { content: ""; border-left: 3px solid transparent; border-right: 3px solid transparent; }
.up::before { border-bottom: 3px solid #222; }
.down::before { border-top: 3px solid #222; }
.vthumb { width: 12px; height: 200px; margin-top: 258px; margin-bottom: 385px; background: #fbfdf9; border: 1px solid #c8ccc7; flex: none; }

/* sheet tabs */
.sheettabs { height: 18px; background: #e1e5e0; display: flex; align-items: stretch; font-size: 10px; color: #444; border-top: 1px solid #cfd3ce; border-bottom: 1px solid #cfd3ce; }
.nav { width: 57px; display: flex; align-items: center; padding-left: 14px; gap: 12px; }
.nav i { width: 0; height: 0; border-top: 2px solid transparent; border-bottom: 2px solid transparent; }
.nav i:first-child { border-right: 3px solid #b9bdb8; }
.nav i:last-child { border-left: 3px solid #b9bdb8; }
.st-tab { display: flex; align-items: center; justify-content: center; white-space: nowrap; flex: none; margin: 1px 0; }
.st-tab.div { border-right: 1px solid #999d98; }
.w33 { width: 33px; }
.w41 { width: 41.500px; }
.w52 { width: 52px; }
.w56 { width: 56px; }
.w76 { width: 76px; }
.st-tab.on { background: #fbfdf9; color: #1e7145; margin: 0 0 -1px; border-bottom: 2px solid #1e7145; border-left: 1px solid #c2c6c1; border-right: 1px solid #c2c6c1; }
.addsheet { margin-left: 19px; width: 11px; height: 11px; align-self: center; border: 1px solid #888; border-radius: 50%; font-size: 10px; line-height: 8px; text-align: center; color: #555; }
.hgrip { width: 2px; margin: 3px 0 3px 807px; background-image: linear-gradient(#b0b4af 50%, transparent 50%); background-size: 2px 3px; }
.hscroll { display: flex; margin: 2px 0 2px 9px; width: 393px; }
.hbtn { width: 13px; background: #fbfdf9; border: 1px solid #8e928d; display: flex; align-items: center; justify-content: center; flex: none; }
.hbtn::before { content: ""; border-top: 3px solid transparent; border-bottom: 3px solid transparent; }
.lft::before { border-right: 3px solid #222; }
.rgt::before { border-left: 3px solid #222; }
.hthumb { width: 294px; background: #fbfdf9; border-bottom: 1px solid #b9bdb8; border-top: 1px solid #b9bdb8; flex: none; }
.htrack { flex: 1; }

/* status */
.status { height: 17px; background: #e9f0e7; display: flex; align-items: center; font-size: 9.500px; color: #444; }
.ready { margin-left: 9px; width: 32px; }
.acc { margin-right: 1px; }
.acctx { font-weight: bold; color: #333; }
.views { margin-left: auto; display: flex; align-self: stretch; margin-right: 3.500px; }
.vb { width: 30px; display: flex; align-items: center; justify-content: center; }
.vb.on { background: #c9cdc8; }
.zoom { display: flex; align-items: center; margin-right: 5.500px; }
.zm { width: 7px; text-align: center; font-size: 10px; }
.ztrack { width: 74px; height: 2px; background: #8a8e89; margin: 0 3px; display: flex; justify-content: center; align-items: center; }
.ztrack i { width: 4px; height: 9px; background: #444; margin-left: 10px; flex: none; }
.zpct { width: 34px; text-align: right; font-size: 10px; letter-spacing: .3px; }

/* taskbar */
.taskbar { height: 30px; background: #0c120f; display: flex; align-items: stretch; color: #e6e9e6; font-size: 9.5px; }
.start { width: 36px; display: flex; align-items: center; justify-content: center; }
.start svg { width: 14px; height: 14px; }
.search { width: 216px; background: #eef2ef; color: #333; display: flex; align-items: center; padding-left: 10px; position: relative; font-size: 13px; overflow: hidden; }
.search span { margin-left: 8px; }
.unicorn { position: absolute; right: 0; bottom: 0; width: 56px; height: 30px; }
.qicon { width: 43px; display: flex; align-items: center; justify-content: center; }
.qicon svg { width: 18px; height: 22px; }
.tk { display: flex; align-items: center; gap: 4px; white-space: nowrap; flex: none; padding-left: 6px; border-bottom: 2px solid #76b4df; }
.t-calc { width: 113px; }
.t-br { width: 113px; margin-left: 8px; padding-left: 4px; gap: 3px; }
.t-ip { width: 115px; margin-left: 7px; }
.t-ld { width: 114px; margin-left: 7px; padding-left: 5px; }
.t-ys { width: 115px; margin-left: 6px; gap: 2px; }
.t-xl { width: 114px; margin-left: 7px; padding-left: 4px; gap: 3px; }
.t-pk { width: 114px; margin-left: 7px; padding-left: 5px; gap: 3px; }
.tray { margin-left: auto; display: flex; align-items: center; color: #d8dbd8; }
.tg { width: 12px; height: 14px; margin-left: 7px; }
.tg1 { margin-left: 4px; }
.tg2 { margin-left: 5px; }
.tg3 { margin-left: 7px; }
.ime { font-size: 12px; margin: 0 1px 0 7px; }
.clock { width: 60px; text-align: center; font-size: 10.500px; line-height: 14px; }
.note { width: 14px; height: 14px; margin: 0 18px 0 7px; }

/* floating */
.recorder { position: absolute; left: 825px; top: 909px; width: 270px; height: 57px; box-shadow: 0 1px 3px rgba(0,0,0,.35); background: #eff3f0; display: flex; flex-direction: column; }
.rec-head { height: 24px; background: #1f2f33; display: flex; align-items: center; justify-content: space-between; padding: 0 7px 0 8px; }
.rec-logo { width: 17px; height: 15px; }
.rec-x { width: 10px; height: 10px; }
.rec-body { flex: 1; display: flex; align-items: center; padding-left: 11px; }
.rec-play { width: 11px; height: 13px; }
.rec-stop { width: 15px; height: 15px; border-radius: 3px; background: #d85a2b; margin-left: 18px; }
.rec-a { width: 20px; height: 20px; margin-left: 56px; }
.rec-b { width: 18px; height: 18px; margin-left: 17px; }
.rec-c { width: 18px; height: 18px; margin-left: 26px; }
.pointer { position: absolute; left: 743px; top: 519px; width: 6px; height: 6px; border-radius: 50%; background: #e6e05a; }
```
